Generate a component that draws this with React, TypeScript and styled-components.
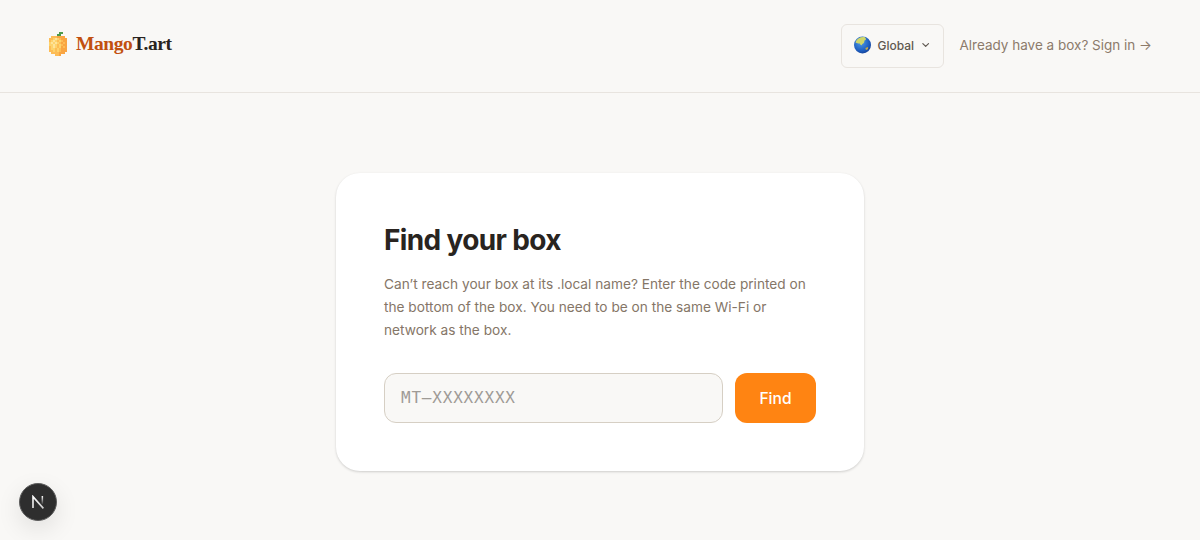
import * as React from 'react';
import styled, { createGlobalStyle } from 'styled-components';

const GlobalStyle = createGlobalStyle`
  html, body {
    margin: 0;
    padding: 0;
    background: #f9f8f6;
    font-family: Inter, "Liberation Sans", sans-serif;
  }
  * { box-sizing: border-box; }
`;

const Page = styled.div`
  height: 540px;
  overflow: hidden;
  display: flex;
  flex-direction: column;
`;

const Header = styled.header`
  height: 93px;
  flex: none;
  padding: 0 48px;
  display: flex;
  align-items: center;
  justify-content: space-between;
  border-bottom: 1px solid #e8e4df;
`;

const Brand = styled.div`
  display: flex;
  align-items: center;
  gap: 9px;
  margin-top: -4px;
  svg { margin-left: 1px; }
`;

const Wordmark = styled.span`
  font-family: "Liberation Serif", serif;
  font-weight: 700;
  font-size: 19.5px;
  letter-spacing: -0.42px;
  color: #292420;
  span { color: #c2500f; }
`;

const Actions = styled.div`
  display: flex;
  align-items: center;
  gap: 15px;
`;

const RegionButton = styled.button`
  height: 44px;
  width: 103px;
  padding: 0 12px 2px;
  display: flex;
  align-items: center;
  gap: 6px;
  background: #f9f8f6;
  border: 1px solid #e8e4df;
  border-radius: 6px;
  font: 500 12px Inter, sans-serif;
  color: #5f5850;
`;

const SignIn = styled.a`
  margin-top: -2px;
  font-size: 13.5px;
  color: #8c7b6b;
`;

const Main = styled.main`
  flex: 1;
  display: flex;
  justify-content: center;
  padding-top: 80px;
`;

const Card = styled.section`
  width: 528px;
  align-self: flex-start;
  padding: 48px;
  background: #fff;
  border-radius: 24px;
  box-shadow: 0 1px 3px rgba(0, 0, 0, 0.12), 0 1px 2px rgba(0, 0, 0, 0.06);
`;

const Title = styled.h1`
  margin: 0 0 14px;
  font-size: 28px;
  line-height: 38px;
  font-weight: 700;
  letter-spacing: -0.65px;
  color: #292420;
`;

const Description = styled.p`
  margin: 0 0 31px;
  font-size: 13.68px;
  line-height: 23px;
  color: #857667;
`;

const Form = styled.form`
  display: flex;
  gap: 12px;
`;

const CodeInput = styled.input`
  flex: 1;
  min-width: 0;
  height: 50px;
  padding: 0 16px 2px;
  background: #f9f8f6;
  border: 1px solid #d6cfc4;
  border-radius: 12px;
  outline: none;
  font-family: "DejaVu Sans Mono", monospace;
  font-size: 16px;
  letter-spacing: 0.8px;
  &::placeholder { color: #9f9b96; opacity: 1; }
`;

const FindButton = styled.button`
  width: 81px;
  height: 50px;
  border: none;
  border-radius: 12px;
  background: #ff8412;
  color: #fff;
  font: 550 15.6px Inter, sans-serif;
`;

const DevBadge = styled.div`
  position: fixed;
  left: 19px;
  top: 483px;
  width: 38px;
  height: 38px;
  border-radius: 50%;
  background: #2e2e2e;
  border: 1px solid #5c5c5c;
  box-shadow: 0 8px 24px rgba(0, 0, 0, 0.1);
  display: flex;
  align-items: center;
  justify-content: center;
`;

const MANGO = [
  '.....gg..',
  '....gg...',
  '.oooaaaa.',
  'ooylyoaaa',
  'oylyoyoaa',
  'ylylyoaoa',
  'yylyoyoaa',
  'oylyoyaoa',
  'oyyoyoaaa',
  'ooyoyoaaa',
  '.ooooaaa.',
  '...ooa...',
];

const MANGO_COLORS: Record<string, string> = {
  g: '#4f9a4a',
  o: '#fdbc55',
  a: '#f9a542',
  y: '#fdd36c',
  l: '#fee39a',
};

function MangoIcon() {
  return (
    <svg width="18" height="24" viewBox="0 0 9 12" shapeRendering="crispEdges">
      {MANGO.flatMap((row, y) =>
        row.split('').map((c, x) =>
          c === '.' ? null : <rect key={`${x}-${y}`} x={x} y={y} width="1" height="1" fill={MANGO_COLORS[c]} />
        )
      )}
    </svg>
  );
}

function GlobeIcon() {
  return (
    <svg width="18" height="18" viewBox="0 0 18 18">
      <defs>
        <radialGradient id="sea" cx="40%" cy="35%" r="75%">
          <stop offset="0%" stopColor="#4f9be6" />
          <stop offset="65%" stopColor="#1f5fc0" />
          <stop offset="100%" stopColor="#12378a" />
        </radialGradient>
      </defs>
      <circle cx="9" cy="9" r="9" fill="url(#sea)" />
      <path d="M1.5 6 C3.5 1.5 8 0 11.5 .8 C13.5 2.5 12.5 4 10.8 4.6 C11.4 6.2 10.2 7.6 8.8 8 C8.2 10.2 6.6 9 6.2 7.5 C4.5 7.2 2.8 7.2 1.5 6 Z" fill="#cfd66a" />
      <path d="M12 12.2 L15 11 L14.6 13.4 L12.6 14.2 Z" fill="#c9a93f" />
    </svg>
  );
}

export default function App() {
  return (
    <Page>
      <GlobalStyle />
      <Header>
        <Brand>
          <MangoIcon />
          <Wordmark><span>Mango</span>T.art</Wordmark>
        </Brand>
        <Actions>
          <RegionButton type="button">
            <GlobeIcon />
            Global
            <svg width="12" height="12" viewBox="0 0 24 24" fill="none" stroke="#5f5850" strokeWidth="2.5" strokeLinecap="round" strokeLinejoin="round">
              <path d="M6 9l6 6 6-6" />
            </svg>
          </RegionButton>
          <SignIn>Already have a box? Sign in →</SignIn>
        </Actions>
      </Header>
      <Main>
        <Card>
          <Title>Find your box</Title>
          <Description>
            Can’t reach your box at its .local name? Enter the code printed on the bottom of the box. You need to be on the same Wi-Fi or network as the box.
          </Description>
          <Form onSubmit={(e) => e.preventDefault()}>
            <CodeInput placeholder="MT–XXXXXXXX" />
            <FindButton type="submit">Find</FindButton>
          </Form>
        </Card>
      </Main>
      <DevBadge>
        <svg width="14" height="14" viewBox="0 0 14 14" fill="none">
          <defs>
            <linearGradient id="nFade" x1="0" y1="0" x2="1" y2="1">
              <stop offset="0%" stopColor="#fff" />
              <stop offset="100%" stopColor="#ccc" />
            </linearGradient>
            <linearGradient id="nStem" x1="0" y1="0" x2="0" y2="1">
              <stop offset="0%" stopColor="#fff" />
              <stop offset="100%" stopColor="#fff" stopOpacity="0.1" />
            </linearGradient>
          </defs>
          <path d="M2 13V1.6L12.4 13.4" stroke="url(#nFade)" strokeWidth="1.6" />
          <rect x="10.6" y="1" width="1.5" height="8" fill="url(#nStem)" />
        </svg>
      </DevBadge>
    </Page>
  );
}
